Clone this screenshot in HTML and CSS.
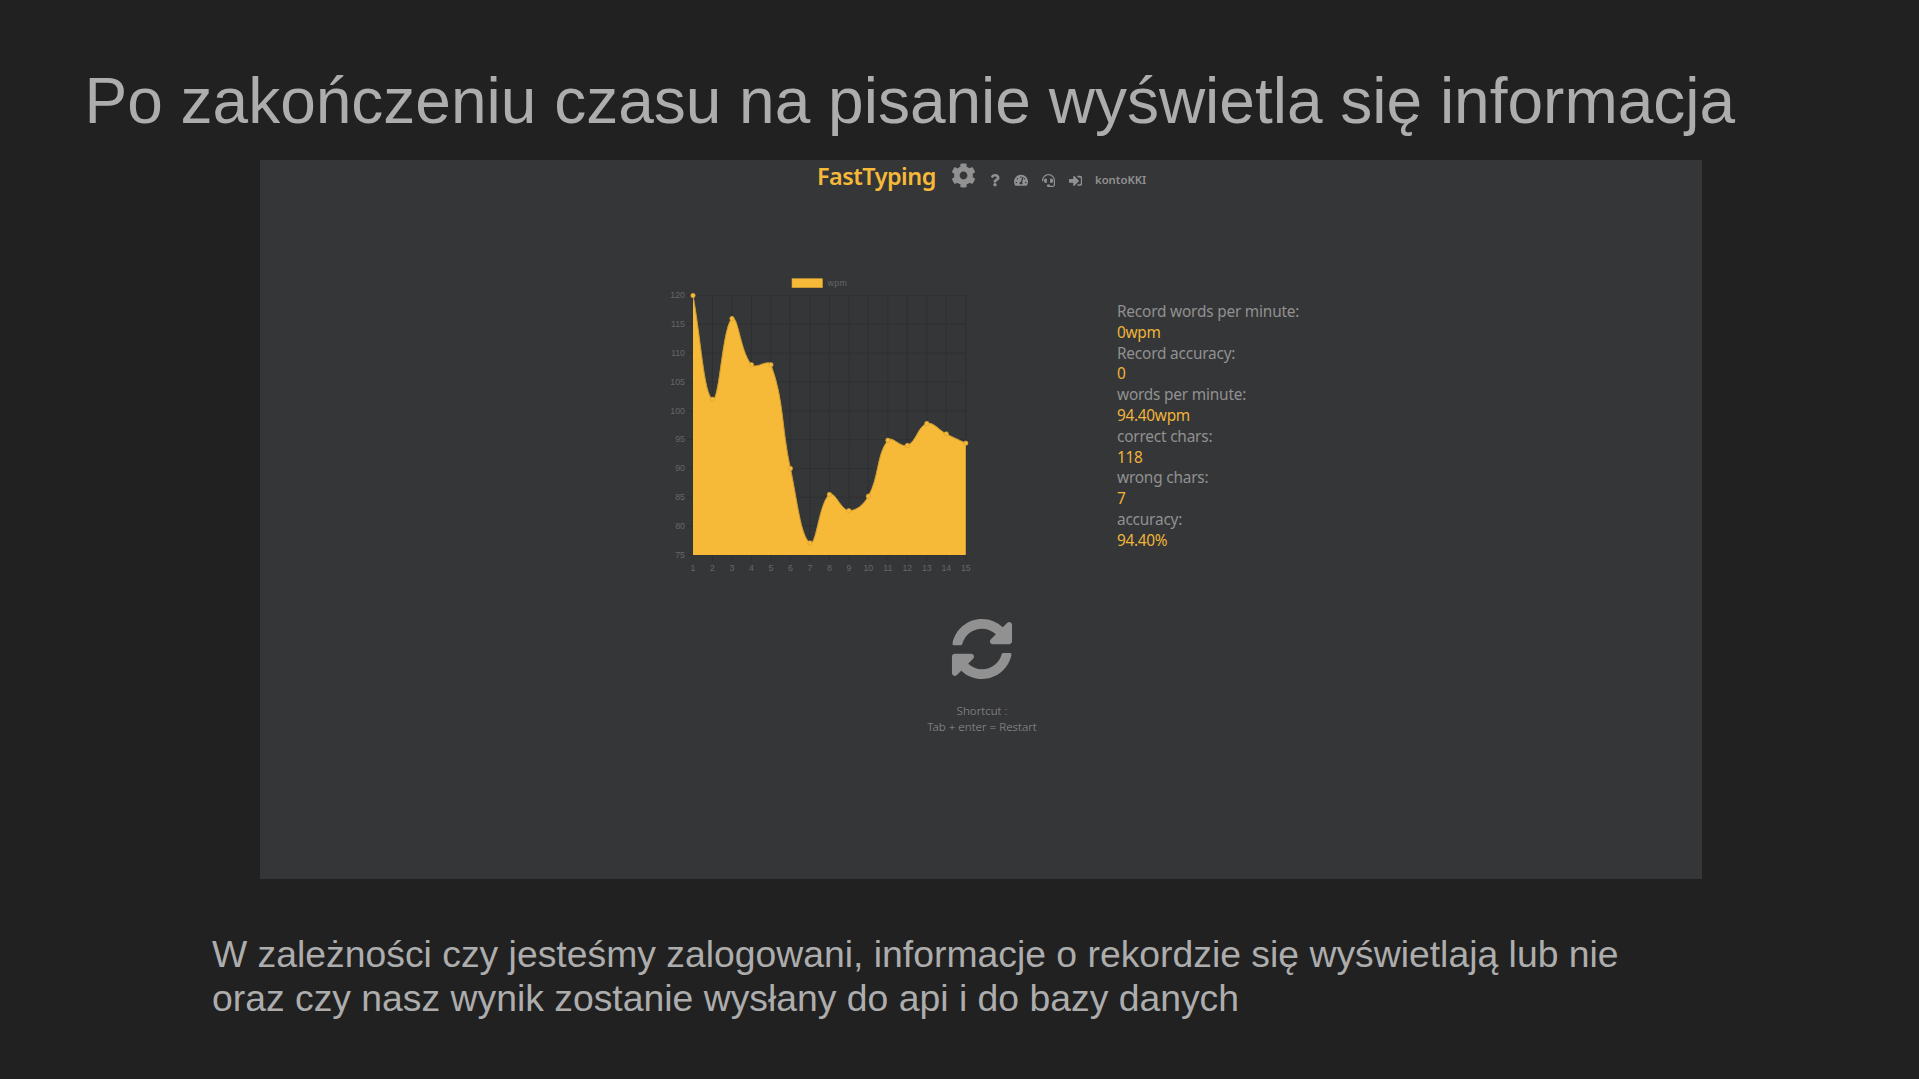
FILE: index.html
```html
<!DOCTYPE html>
<html lang="pl">
<head>
<meta charset="utf-8">
<title>FastTyping</title>
<link rel="stylesheet" href="styles.css">
</head>
<body>
<main class="slide">
  <h1 class="title">Po zakończeniu czasu na pisanie wyświetla się informacja</h1>
  <section class="app">
    <header class="nav">
      <span class="logo">FastTyping</span>
      <svg class="icon cog" viewBox="0 0 512 512"><path d="M487.4 315.7l-42.6-24.6c4.3-23.2 4.3-47 0-70.2l42.6-24.6c4.9-2.8 7.1-8.6 5.5-14-11.1-35.6-30-67.8-54.7-94.6-3.8-4.1-10-5.1-14.8-2.3L380.8 110c-17.9-15.4-38.5-27.3-60.8-35.1V25.8c0-5.6-3.9-10.5-9.4-11.7-36.7-8.2-74.3-7.8-109.2 0-5.5 1.2-9.4 6.1-9.4 11.7V75c-22.2 7.9-42.8 19.8-60.8 35.1L88.7 85.5c-4.9-2.8-11-1.9-14.8 2.3-24.7 26.7-43.6 58.9-54.7 94.6-1.7 5.4.6 11.2 5.5 14L67.3 221c-4.3 23.2-4.3 47 0 70.2l-42.6 24.6c-4.9 2.8-7.1 8.6-5.5 14 11.1 35.6 30 67.8 54.7 94.6 3.8 4.1 10 5.1 14.8 2.3l42.6-24.6c17.9 15.4 38.5 27.3 60.8 35.1v49.2c0 5.6 3.9 10.5 9.4 11.7 36.7 8.2 74.3 7.8 109.2 0 5.5-1.2 9.4-6.1 9.4-11.7v-49.2c22.2-7.9 42.8-19.8 60.8-35.1l42.6 24.6c4.9 2.8 11 1.9 14.8-2.3 24.7-26.7 43.6-58.9 54.7-94.6 1.5-5.5-.7-11.3-5.6-14.1zM256 336c-44.1 0-80-35.9-80-80s35.9-80 80-80 80 35.9 80 80-35.9 80-80 80z"/></svg>
      <svg class="icon question" viewBox="0 0 384 512"><path d="M202.021 0C122.202 0 70.503 32.703 29.914 91.026c-7.363 10.58-5.093 25.086 5.178 32.874l43.138 32.709c10.373 7.865 25.132 6.026 33.253-4.148 25.049-31.381 43.63-49.449 82.757-49.449 30.764 0 68.816 19.799 68.816 49.631 0 22.552-18.617 34.134-48.993 51.164-35.423 19.86-82.299 44.576-82.299 106.405V320c0 13.255 10.745 24 24 24h72.471c13.255 0 24-10.745 24-24v-5.773c0-42.86 125.268-44.645 125.268-160.627C377.504 66.256 286.902 0 202.021 0zM192 373.459c-38.196 0-69.271 31.075-69.271 69.271 0 38.195 31.075 69.27 69.271 69.27s69.271-31.075 69.271-69.271-31.075-69.27-69.271-69.27z"/></svg>
      <svg class="icon gauge" viewBox="0 0 576 512"><path d="M288 32C128.94 32 0 160.94 0 320c0 52.8 14.25 102.26 39.06 144.8 5.61 9.62 16.3 15.2 27.44 15.2h443c11.14 0 21.83-5.58 27.44-15.2C561.75 422.26 576 372.8 576 320c0-159.06-128.94-288-288-288zm0 64c14.71 0 26.58 10.13 30.32 23.65-1.11 2.26-2.64 4.23-3.45 6.67l-9.22 27.67c-5.13 3.49-10.97 6.01-17.64 6.01-17.67 0-32-14.33-32-32S270.33 96 288 96zM96 384c-17.67 0-32-14.33-32-32s14.33-32 32-32 32 14.33 32 32-14.33 32-32 32zm48-160c-17.67 0-32-14.33-32-32s14.33-32 32-32 32 14.33 32 32-14.33 32-32 32zm246.77-72.41l-61.33 184C343.13 347.33 352 364.54 352 384c0 11.72-3.38 22.55-8.88 32H232.88c-5.5-9.45-8.88-20.28-8.88-32 0-33.94 26.5-61.43 59.9-63.59l61.34-184.01c4.17-12.56 17.73-19.45 30.36-15.17 12.57 4.19 19.35 17.79 15.17 30.36zm14.66 57.2l15.52-46.55c3.47-1.29 7.13-2.23 11.05-2.23 17.67 0 32 14.33 32 32s-14.33 32-32 32c-11.38-.01-20.89-6.28-26.57-15.22zM480 384c-17.67 0-32-14.33-32-32s14.33-32 32-32 32 14.33 32 32-14.33 32-32 32z"/></svg>
      <svg class="icon headset" viewBox="0 0 512 512"><path d="M192 208c0-17.67-14.33-32-32-32h-16c-35.35 0-64 28.65-64 64v48c0 35.35 28.65 64 64 64h16c17.67 0 32-14.33 32-32V208zm176 144c35.35 0 64-28.65 64-64v-48c0-35.35-28.65-64-64-64h-16c-17.67 0-32 14.33-32 32v112c0 17.67 14.33 32 32 32h16zM256 0C113.18 0 4.58 118.83 0 256v16c0 8.84 7.16 16 16 16h16c8.84 0 16-7.16 16-16v-16c0-114.69 93.31-208 208-208s208 93.31 208 208h-.12c.08 2.43.12 165.72.12 165.72 0 23.35-18.93 42.28-42.28 42.28H320c0-26.51-21.49-48-48-48h-32c-26.51 0-48 21.49-48 48s21.49 48 48 48h181.72c49.86 0 90.28-40.42 90.28-90.28V256C507.42 118.83 398.82 0 256 0z"/></svg>
      <svg class="icon signin" viewBox="0 0 512 512"><path d="M416 448h-84c-6.6 0-12-5.4-12-12v-40c0-6.6 5.4-12 12-12h84c17.7 0 32-14.3 32-32V160c0-17.7-14.3-32-32-32h-84c-6.6 0-12-5.4-12-12V76c0-6.6 5.4-12 12-12h84c53 0 96 43 96 96v192c0 53-43 96-96 96zm-47-201L201 79c-15-15-41-4.5-41 17v96H24c-13.3 0-24 10.7-24 24v96c0 13.3 10.7 24 24 24h136v96c0 21.5 26 32 41 17l168-168c9.3-9.4 9.3-24.6 0-34z"/></svg>
      <span class="user">kontoKKI</span>
    </header>
    <div class="results">
      <svg class="chart" id="chart" width="320" height="305" viewBox="0 0 320 305"></svg>
      <dl class="stats">
        <dt>Record words per minute:</dt><dd>0wpm</dd>
        <dt>Record accuracy:</dt><dd>0</dd>
        <dt>words per minute:</dt><dd>94.40wpm</dd>
        <dt>correct chars:</dt><dd>118</dd>
        <dt>wrong chars:</dt><dd>7</dd>
        <dt>accuracy:</dt><dd>94.40%</dd>
      </dl>
    </div>
    <div class="restart">
      <svg class="icon sync" viewBox="0 0 512 512"><path d="M370.72 133.28C339.458 104.008 298.888 87.962 255.848 88c-77.458.068-144.328 53.178-162.791 126.85-1.344 5.363-6.122 9.15-11.651 9.15H24.103c-7.498 0-13.194-6.807-11.807-14.176C33.933 94.924 134.813 8 256 8c66.448 0 126.791 26.136 171.315 68.685L463.03 40.97C478.149 25.851 504 36.559 504 57.941V192c0 13.255-10.745 24-24 24H345.941c-21.382 0-32.09-25.851-16.971-40.971l41.75-41.749zM32 296h134.059c21.382 0 32.09 25.851 16.971 40.971l-41.75 41.75c31.262 29.273 71.835 45.319 114.876 45.28 77.418-.07 144.315-53.144 162.787-126.849 1.344-5.363 6.122-9.15 11.651-9.15h57.304c7.498 0 13.194 6.807 11.807 14.176C478.067 417.076 377.187 504 256 504c-66.448 0-126.791-26.136-171.315-68.685L48.97 471.03C33.851 486.149 8 475.441 8 454.059V320c0-13.255 10.745-24 24-24z"/></svg>
      <p class="hint">Shortcut :<br>Tab + enter = Restart</p>
    </div>
  </section>
  <p class="caption">W zależności czy jesteśmy zalogowani, informacje o rekordzie się wyświetlają lub nie<br>oraz czy nasz wynik zostanie wysłany do api i do bazy danych</p>
</main>
<script src="chart.js"></script>
</body>
</html>
```
FILE: styles.css
```css
* { box-sizing: border-box; }
body { margin: 0; background: #212121; }
.slide {
  width: 1919px; height: 1079px; overflow: hidden;
  display: flex; flex-direction: column;
  background: #212121; color: #adadad;
  font-family: "Liberation Sans", Arial, sans-serif;
}
.title {
  margin: 0; height: 160px; padding: 64px 0 0 84.5px;
  font-size: 64px; line-height: 74px; font-weight: 400; white-space: nowrap;
}
.app {
  width: 1442px; height: 719px; margin-left: 260px; flex: none;
  display: flex; flex-direction: column;
  background: #353638; color: #919191;
  font-family: "Noto Sans", "Open Sans", sans-serif;
}
.icon { display: block; fill: currentColor; flex: none; }
.nav { display: flex; height: 34px; padding-left: 557px; align-items: flex-start; }
.logo {
  width: 134px; color: #f6b938; font-size: 23.4px; line-height: 32px;
  font-weight: 600; white-space: nowrap; letter-spacing: -0.5px;
}
.cog { width: 25px; height: 25px; margin-top: 3px; }
.question { width: 10px; height: 12.5px; margin: 14px 0 0 13.5px; }
.gauge { width: 14px; height: 12.5px; margin: 14px 0 0 14.5px; }
.headset { width: 13px; height: 13px; margin: 14px 0 0 14px; }
.signin { width: 13.5px; height: 13.5px; margin: 13.5px 0 0 13.5px; }
.user { margin: 12px 0 0 13px; font-size: 11.3px; line-height: 16px; font-weight: 600; }
.results { display: flex; height: 305px; margin: 76px 0 0 400px; }
.chart { flex: none; }
.chart text { font-family: "Liberation Sans", Arial, sans-serif; font-size: 8.8px; fill: #656668; }
.grid-line { stroke: #2f3032; stroke-width: 1; }
.area { fill: #f6b938; }
.curve { fill: none; stroke: #cf9d34; stroke-width: 1; }
.dot { fill: #f6b938; stroke: #d39f33; stroke-width: .6; }
.stats { margin: 32px 0 0 137px; font-size: 15.4px; line-height: 20.8px; white-space: nowrap; }
.stats dt { letter-spacing: -0.2px; }
.stats dd { margin: 0; color: #f0b43a; letter-spacing: -0.3px; }
.restart { display: flex; flex-direction: column; align-items: center; margin-top: 42.5px; padding-left: 2px; }
.sync { width: 62px; height: 62px; }
.hint { margin: 23px 0 0; text-align: center; font-size: 11.6px; line-height: 16.4px; font-weight: 300; }
.caption { margin: 53px 0 0 212px; font-size: 37.33px; line-height: 44px; white-space: nowrap; }
```
FILE: chart.js
```js
const values = [120, 102, 116, 108, 108, 90, 77.1, 85.5, 82.7, 85.2, 94.9, 94, 97.8, 96, 94.4];
const left = 33, right = 305.8, top0 = 25.5, bottom = 285, tension = 0.4;
const svg = document.getElementById('chart');
const step = (right - left) / (values.length - 1);
const yOf = v => top0 + (120 - v) * (bottom - top0) / 45;
const pts = values.map((v, i) => ({ x: left + i * step, y: yOf(v) }));

function add(tag, attrs, text) {
  const el = document.createElementNS('http://www.w3.org/2000/svg', tag);
  for (const k in attrs) el.setAttribute(k, attrs[k]);
  if (text !== undefined) el.textContent = text;
  svg.appendChild(el);
}

// Grid and axis labels
for (let v = 75; v <= 120; v += 5) {
  add('line', { class: 'grid-line', x1: left - 6, x2: right, y1: yOf(v), y2: yOf(v) });
  add('text', { x: left - 8, y: yOf(v) + 2.7, 'text-anchor': 'end' }, v);
}
pts.forEach((p, i) => {
  add('line', { class: 'grid-line', x1: p.x, x2: p.x, y1: top0, y2: bottom + 6 });
  add('text', { x: p.x, y: bottom + 15.8, 'text-anchor': 'middle' }, i + 1);
});

// Smoothed curve: control points from the neighbours of each point
const clampY = y => Math.max(top0, Math.min(bottom, y));
const ctrl = pts.map((p, i) => {
  const a = pts[i - 1] || p, b = pts[i + 1] || p;
  const d1 = Math.hypot(p.x - a.x, p.y - a.y), d2 = Math.hypot(b.x - p.x, b.y - p.y);
  const f1 = tension * d1 / (d1 + d2), f2 = tension * d2 / (d1 + d2);
  return {
    px: p.x - f1 * (b.x - a.x), py: clampY(p.y - f1 * (b.y - a.y)),
    nx: p.x + f2 * (b.x - a.x), ny: clampY(p.y + f2 * (b.y - a.y))
  };
});
let d = `M${pts[0].x} ${pts[0].y}`;
for (let i = 1; i < pts.length; i++) {
  d += `C${ctrl[i - 1].nx} ${ctrl[i - 1].ny} ${ctrl[i].px} ${ctrl[i].py} ${pts[i].x} ${pts[i].y}`;
}
add('path', { class: 'area', d: `${d}V${bottom}H${left}Z` });
add('path', { class: 'curve', d });
pts.forEach(p => add('circle', { class: 'dot', cx: p.x, cy: p.y, r: 2.2 }));

// Legend
add('rect', { class: 'dot', x: 132, y: 8.7, width: 30.5, height: 9 });
add('text', { x: 167.5, y: 15.5, textLength: 19.3 }, 'wpm');
```
